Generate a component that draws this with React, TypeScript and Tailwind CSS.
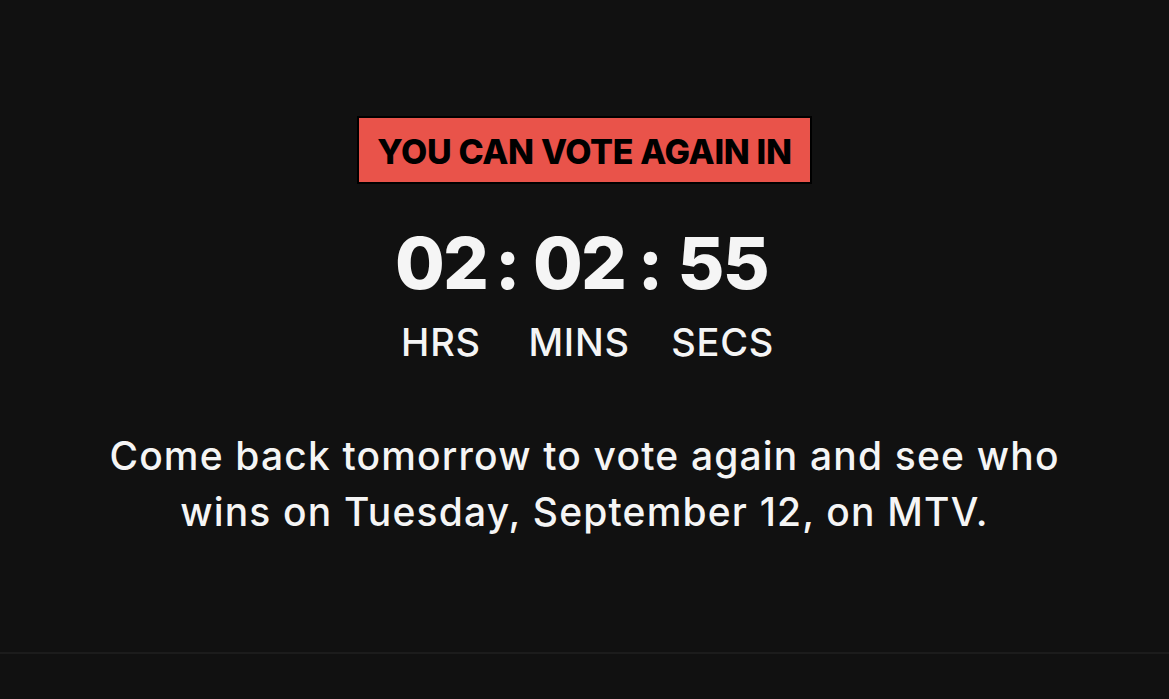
import React from "react";

const units = [
  { value: "02", label: "HRS" },
  { value: "02", label: "MINS" },
  { value: "55", label: "SECS" },
];

function Countdown() {
  return (
    <div className="flex items-start gap-[8px]">
      {units.map((u, i) => (
        <React.Fragment key={u.label}>
          {i > 0 && (
            <span className="text-[72px] font-extrabold leading-[72px] text-[#f5f5f5]">:</span>
          )}
          <div className="flex flex-col items-center">
            <span className="text-[72px] font-extrabold leading-[72px] tracking-tight text-[#f5f5f5]">
              {u.value}
            </span>
            <span className="mt-[23px] text-[38px] font-medium leading-[40px] tracking-[0.02em] text-[#f5f5f5]">
              {u.label}
            </span>
          </div>
        </React.Fragment>
      ))}
    </div>
  );
}

export default function App() {
  return (
    <main
      className="min-h-screen bg-[#111111]"
      style={{ fontFamily: "Inter, 'Noto Sans', sans-serif" }}
    >
      <section className="flex h-[654px] flex-col items-center border-b-2 border-[#1c1c1c] pt-[116px]">
        <div className="border-2 border-black bg-[#e9534a] px-[18px] pt-[16px] pb-[12px]">
          <span className="block text-[34px] font-extrabold leading-[36px] tracking-[-0.01em] text-black">
            YOU CAN VOTE AGAIN IN
          </span>
        </div>

        <div className="mt-[43px]">
          <Countdown />
        </div>

        <p className="mt-[66px] max-w-[1000px] text-center text-[39px] font-medium leading-[56px] tracking-[0.03em] text-[#f5f5f5]">
          Come back tomorrow to vote again and see who wins on Tuesday, September 12, on MTV.
        </p>
      </section>
    </main>
  );
}
